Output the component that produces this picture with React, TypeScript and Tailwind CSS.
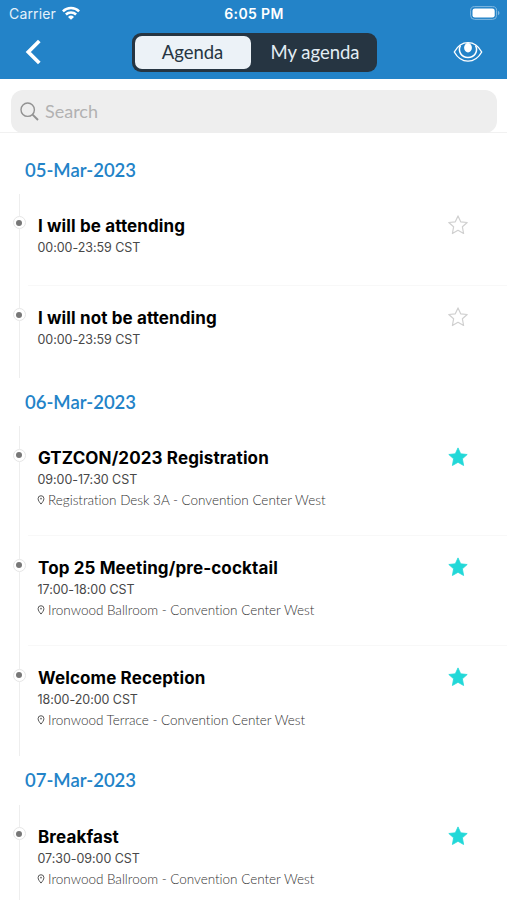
import React from 'react';

interface Session {
  title: string;
  time: string;
  place?: string;
  starred?: boolean;
}

interface Day {
  date: string;
  sessions: Session[];
}

const days: Day[] = [
  {
    date: '05-Mar-2023',
    sessions: [
      { title: 'I will be attending', time: '00:00-23:59 CST' },
      { title: 'I will not be attending', time: '00:00-23:59 CST' },
    ],
  },
  {
    date: '06-Mar-2023',
    sessions: [
      {
        title: 'GTZCON/2023 Registration',
        time: '09:00-17:30 CST',
        place: 'Registration Desk 3A - Convention Center West',
        starred: true,
      },
      {
        title: 'Top 25 Meeting/pre-cocktail',
        time: '17:00-18:00 CST',
        place: 'Ironwood Ballroom - Convention Center West',
        starred: true,
      },
      {
        title: 'Welcome Reception',
        time: '18:00-20:00 CST',
        place: 'Ironwood Terrace - Convention Center West',
        starred: true,
      },
    ],
  },
  {
    date: '07-Mar-2023',
    sessions: [
      {
        title: 'Breakfast',
        time: '07:30-09:00 CST',
        place: 'Ironwood Ballroom - Convention Center West',
        starred: true,
      },
    ],
  },
];

function StarIcon({ filled }: { filled?: boolean }) {
  return (
    <svg viewBox="0 0 22 22" className="h-[22px] w-[22px] shrink-0">
      <path
        d="M11 1.900l2.700 5.900 6.500.7-4.800 4.300 1.200 6.700-5.600-3.200-5.600 3.200 1.200-6.700-4.800-4.300 6.500-.7z"
        fill={filled ? '#22d8d8' : 'none'}
        stroke={filled ? '#22d8d8' : '#d0d0d0'}
        strokeWidth={filled ? 0.8 : 1.2}
        strokeLinejoin="round"
      />
    </svg>
  );
}

function PinIcon() {
  return (
    <svg viewBox="0 0 8 11" className="h-[10px] w-[8px] shrink-0" fill="none" stroke="#555" strokeWidth="1.1">
      <path d="M4 10C2.500 8.200.8 6 .8 4a3.200 3.200 0 0 1 6.400 0c0 2-1.700 4.200-3.200 6z" />
      <circle cx="4" cy="4" r="0.9" fill="#555" stroke="none" />
    </svg>
  );
}

function StatusBar() {
  return (
    <div className="grid h-[27px] grid-cols-3 items-center pl-[9px] pr-[7px] font-['Inter',sans-serif] text-[14px] text-white">
      <div className="flex items-center gap-[6px]">
        <span className="tracking-[0.15px] text-[#e5f1fa]">Carrier</span>
        <svg viewBox="0 0 18 14" className="-mt-[2px] h-[14px] w-[18px]" fill="none" stroke="#fff" strokeWidth="2.500">
          <path d="M.9 5.300a11.500 11.500 0 0 1 16.200 0" />
          <path d="M3.900 8.500a7.200 7.200 0 0 1 10.200 0" />
          <path d="M9 13.700L6 10.900a4.300 4.300 0 0 1 6 0z" fill="#fff" stroke="none" />
        </svg>
      </div>
      <span className="-ml-[1px] text-center font-semibold tracking-[0.35px]">6:05 PM</span>
      <svg viewBox="0 0 30 14" className="-mt-[1px] h-[14px] w-[30px] justify-self-end">
        <rect x="0.6" y="0.6" width="26" height="12.800" rx="4" fill="none" stroke="#82b9e1" />
        <rect x="2.500" y="2.400" width="22.200" height="9.200" rx="2.400" fill="#fff" />
        <path d="M28 4.800c2 .8 2 3.600 0 4.400z" fill="#82b9e1" />
      </svg>
    </div>
  );
}

function NavBar() {
  return (
    <div className="flex h-[52px] items-start pl-[25px] pr-[24px]">
      <svg viewBox="0 0 18 26" className="mt-[12px] h-[26px] w-[18px]" fill="none" stroke="#fff" strokeWidth="3.700">
        <path d="M14.300 2L3.300 13l11 11" />
      </svg>
      <div className="ml-[88.500px] mt-[6px] flex h-[39px] w-[245px] rounded-[9px] bg-[#263542] p-[3px] font-['Lato',sans-serif] text-[18.500px]">
        <button className="flex w-[116px] items-center justify-center rounded-[7px] bg-[#ecf2f7] text-[#263542]">
          Agenda
        </button>
        <button className="flex flex-1 items-center justify-center pl-[6px] text-[#e3edf5]">My agenda</button>
      </div>
      <svg viewBox="0 0 30 22" className="ml-auto mt-[14px] h-[22px] w-[30px]" fill="none" stroke="#fff" strokeWidth="1.4">
        <path d="M1.300 11C8-1.500 22-1.500 28.700 11 22 23.200 8 23.200 1.300 11z" />
        <path d="M7.500 4.500C4.500 10.500 8.500 16.500 15 16.500s10.500-6 7.500-12" strokeWidth="1.5" />
        <ellipse cx="15" cy="6.700" rx="3.900" ry="4.700" fill="#fff" stroke="none" />
      </svg>
    </div>
  );
}

function SearchBar() {
  return (
    <div className="h-[54px] border-b border-[#f1f1f1] pl-[11px] pr-[10px] pt-[11px]">
      <div className="flex h-[43px] items-center gap-[6px] rounded-[12px] bg-[#eeeeee] pl-[9px]">
        <svg viewBox="0 0 19 19" className="h-[19px] w-[19px]" fill="none" stroke="#929292" strokeWidth="1.4">
          <circle cx="7.700" cy="7.700" r="6.700" />
          <path d="M12.600 12.600l5.400 5.400" strokeWidth="2" />
        </svg>
        <span className="font-['Lato',sans-serif] text-[18px] text-[#b2b2b2]">Search</span>
      </div>
    </div>
  );
}

function SessionRow({ session, last }: { session: Session; last: boolean }) {
  return (
    <div className={`flex ${session.place ? 'h-[110px]' : 'h-[92px]'}`}>
      {/* timeline rail with its marker */}
      <div className="flex w-[28px] shrink-0 flex-col items-center pl-[10px]">
        <div className="h-[22.300px] w-px bg-[#eeeeee]" />
        <div className="flex h-[13px] w-[13px] shrink-0 items-center justify-center rounded-full border border-[#e6e6e6] bg-white">
          <div className="h-[6px] w-[6px] rounded-full bg-[#777777]" />
        </div>
        <div className="w-px flex-1 bg-[#eeeeee]" />
      </div>
      <div className={`flex flex-1 items-start pl-[10px] pr-[38px] ${last ? '' : 'border-b border-[#f8f8f8]'}`}>
        <div className="flex-1 pt-[21px] font-['Inter',sans-serif]">
          <h3 className="whitespace-nowrap text-[17px] font-bold leading-[22px] tracking-[0.120px] text-black">
            {session.title}
          </h3>
          <p className="-ml-[0.500px] text-[12.500px] leading-[22px] tracking-[-0.050px] text-[#484848]">{session.time}</p>
          {session.place && (
            <div className="-ml-[1px] flex items-center gap-[3px] font-['Lato',sans-serif] text-[13.500px] font-light leading-[18px] tracking-[-0.020px] text-[#333333]">
              <PinIcon />
              <span className="whitespace-nowrap">{session.place}</span>
            </div>
          )}
        </div>
        <div className="mt-[20px]">
          <StarIcon filled={session.starred} />
        </div>
      </div>
    </div>
  );
}

export default function App() {
  return (
    <div className="h-[900px] w-[507px] overflow-hidden bg-white">
      <header className="bg-[#2383c8]">
        <StatusBar />
        <NavBar />
      </header>
      <SearchBar />
      <main className="pt-[12.600px]">
        {days.map((day) => (
          <section key={day.date}>
            <h2 className="h-[48.400px] pl-[25px] font-['Lato',sans-serif] text-[18.500px] font-semibold leading-[48.800px] text-[#2383c8]">
              {day.date}
            </h2>
            {day.sessions.map((session, i) => (
              <SessionRow key={session.title} session={session} last={i === day.sessions.length - 1} />
            ))}
          </section>
        ))}
      </main>
    </div>
  );
}
